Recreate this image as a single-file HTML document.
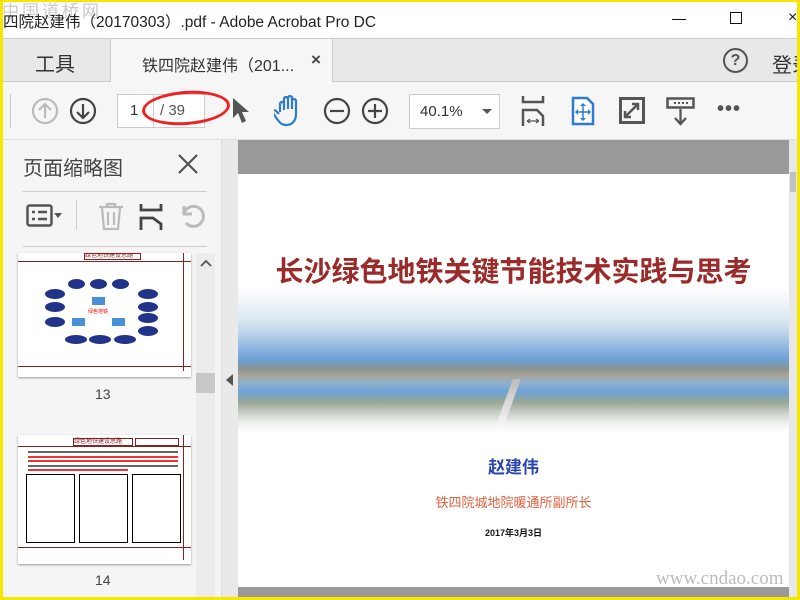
<!DOCTYPE html>
<html><head><meta charset="utf-8"><style>
*{margin:0;padding:0;box-sizing:border-box}
body{width:800px;height:600px;overflow:hidden;background:#fff;position:relative;font-family:"Liberation Sans","Noto Sans CJK SC",sans-serif}
.a{position:absolute;white-space:nowrap}
.ic{position:absolute}
</style></head><body>
<div class="a" style="left:0;top:0;width:800px;height:600px;border:3px solid #f7e600;border-top:2px solid #f7e600;z-index:50;pointer-events:none"></div>
<div class="a" style="left:0;top:0;width:800px;height:38px;background:#fff"></div>
<div class="a" style="left:2px;top:-3px;font-size:17px;color:#c9c9c9;letter-spacing:3px">中国道桥网</div>
<div class="a" style="left:3px;top:10px;font-size:15.5px;color:#222">四院赵建伟（20170303）.pdf - Adobe Acrobat Pro DC</div>
<div class="a" style="left:672px;top:19px;width:14px;height:1px;background:#111"></div>
<div class="a" style="left:730px;top:12px;width:12px;height:12px;border:1px solid #111"></div>
<div class="a" style="left:788px;top:9px;font-size:16px;color:#111">×</div>
<div class="a" style="left:0;top:38px;width:800px;height:44px;background:#e8e8e8;border-top:1px solid #ccc;border-bottom:1px solid #ccc"></div>
<div class="a" style="left:35px;top:48px;font-size:20px;color:#333">工具</div>
<div class="a" style="left:110px;top:39px;width:223px;height:44px;background:#f6f6f6;border-left:1px solid #ccc;border-right:1px solid #ccc"></div>
<div class="a" style="left:142px;top:52px;font-size:16px;color:#333">铁四院赵建伟（201...</div>
<div class="a" style="left:311px;top:50px;font-size:17px;color:#444;font-weight:bold">×</div>
<div class="a" style="left:723px;top:48px;width:25px;height:25px;border:2px solid #555;border-radius:50%;text-align:center;font-size:16px;font-weight:bold;color:#555;line-height:21px">?</div>
<div class="a" style="left:772px;top:49px;font-size:20px;color:#333">登录</div>
<div class="a" style="left:0;top:82px;width:800px;height:58px;background:#f6f6f6;border-bottom:1px solid #ddd"></div>
<div class="a" style="left:10px;top:94px;width:1px;height:34px;background:#ccc"></div>
<svg class="ic" style="left:31px;top:97px" width="28" height="28"><circle cx="14" cy="14" r="12" fill="none" stroke="#bbb" stroke-width="2.2"/><path d="M14 21V8M8 13l6-6 6 6" fill="none" stroke="#bbb" stroke-width="2.2"/></svg>
<svg class="ic" style="left:69px;top:97px" width="28" height="28"><circle cx="14" cy="14" r="12" fill="none" stroke="#444" stroke-width="2.2"/><path d="M14 7v13M8 15l6 6 6-6" fill="none" stroke="#444" stroke-width="2.2"/></svg>
<div class="a" style="left:117px;top:94px;width:37px;height:34px;background:#fff;border:1px solid #ccc"></div>
<div class="a" style="left:130px;top:102px;font-size:15px;color:#333">1</div>
<div class="a" style="left:154px;top:94px;width:51px;height:34px;background:#fff;border:1px solid #ccc;border-left:none"></div>
<div class="a" style="left:160px;top:102px;font-size:15px;color:#555">/ 39</div>
<div class="a" style="left:142px;top:91px;width:88px;height:34px;border:3px solid #e22;border-radius:50%;transform:rotate(-4deg)"></div>
<svg class="ic" style="left:231px;top:96px" width="20" height="30"><path d="M2 2L2 22 7 17 11 27 15 25 11 16 18 16Z" fill="#555"/></svg>
<svg class="ic" style="left:274px;top:94px" width="30" height="34"><path d="M6 18V10a2 2 0 014 0v6V5a2 2 0 014 0v10V4a2 2 0 014 0v11V7a2 2 0 014 0v13c0 7-4 11-10 11-4 0-6-2-9-6l-4-6c-1-2 1-4 3-2l3 3" fill="none" stroke="#2a7bd1" stroke-width="2.2"/></svg>
<svg class="ic" style="left:323px;top:97px" width="28" height="28"><circle cx="14" cy="14" r="12" fill="none" stroke="#444" stroke-width="2.2"/><path d="M7 14h14" stroke="#444" stroke-width="2.2"/></svg>
<svg class="ic" style="left:361px;top:97px" width="28" height="28"><circle cx="14" cy="14" r="12" fill="none" stroke="#444" stroke-width="2.2"/><path d="M7 14h14M14 7v14" stroke="#444" stroke-width="2.2"/></svg>
<div class="a" style="left:409px;top:94px;width:91px;height:35px;background:#fff;border:1px solid #ccc"></div>
<div class="a" style="left:420px;top:103px;font-size:15px;color:#333">40.1%</div>
<div class="a" style="left:482px;top:109px;border-left:5px solid transparent;border-right:5px solid transparent;border-top:5px solid #555"></div>
<svg class="ic" style="left:521px;top:95px" width="26" height="32"><path d="M2 1v6h20V1M2 31V15h14l6 6v10" fill="none" stroke="#555" stroke-width="2.5"/><path d="M6 26h12M6 26l3-2M6 26l3 2M18 26l-3-2M18 26l-3 2" stroke="#555" stroke-width="1.2"/></svg>
<svg class="ic" style="left:571px;top:96px" width="24" height="30"><path d="M2 2h14l6 6v20H2Z" fill="#fff" stroke="#2a7bd1" stroke-width="2.5"/><path d="M12 8v16M5 16h14" stroke="#2a7bd1" stroke-width="1.5"/><path d="M12 7l-3 3h6ZM12 25l-3-3h6ZM4 16l3-3v6ZM20 16l-3-3v6Z" fill="#2a7bd1"/></svg>
<svg class="ic" style="left:619px;top:97px" width="26" height="27"><rect x="1.5" y="1.5" width="23" height="24" fill="none" stroke="#555" stroke-width="3"/><path d="M6 20L19 7M13 7h6v6M6 14v6h6" fill="none" stroke="#555" stroke-width="2.5"/></svg>
<svg class="ic" style="left:666px;top:97px" width="29" height="30"><rect x="1.5" y="1.5" width="26" height="9" fill="none" stroke="#555" stroke-width="2.5"/><path d="M8 6h2M12 6h2M16 6h2M20 6h2" stroke="#555" stroke-width="2"/><path d="M14.5 12v15M9 21l5.5 6 5.5-6" fill="none" stroke="#555" stroke-width="2.3"/></svg>
<div class="a" style="left:717px;top:98px;font-size:20px;color:#555;letter-spacing:1px;font-weight:bold">•••</div>
<div class="a" style="left:0;top:140px;width:222px;height:460px;background:#f5f5f5;border-right:1px solid #ddd"></div>
<div class="a" style="left:23px;top:152px;font-size:20px;color:#444">页面缩略图</div>
<svg class="ic" style="left:177px;top:153px" width="22" height="22"><path d="M2 2l18 18M20 2L2 20" stroke="#555" stroke-width="2.2"/></svg>
<div class="a" style="left:23px;top:191px;width:184px;height:1px;background:#ccc"></div>
<svg class="ic" style="left:26px;top:204px" width="38" height="26"><rect x="1.5" y="1.5" width="24" height="20" rx="2" fill="none" stroke="#555" stroke-width="2.5"/><path d="M6 8h3M12 8h9M6 15h3M12 15h9" stroke="#555" stroke-width="2.5"/><path d="M28 9h8l-4 5Z" fill="#555"/></svg>
<div class="a" style="left:76px;top:200px;width:1px;height:30px;background:#ccc"></div>
<svg class="ic" style="left:97px;top:202px" width="28" height="29"><path d="M2 5h24M10 5V2h8v3M5 6l2 21h14l2-21M11 10v13M17 10v13" fill="none" stroke="#bbb" stroke-width="2.2"/></svg>
<svg class="ic" style="left:139px;top:203px" width="24" height="28"><path d="M2 1v6h20V1M2 27V15h12l8 6v6" fill="none" stroke="#444" stroke-width="2.8"/></svg>
<svg class="ic" style="left:180px;top:203px" width="28" height="28"><path d="M6 20a10 10 0 10-2-10M4 3v8h8" fill="none" stroke="#bbb" stroke-width="3"/></svg>
<div class="a" style="left:23px;top:246px;width:184px;height:1px;background:#ccc"></div>
<div class="a" style="left:18px;top:253px;width:173px;height:124px;background:#fff;box-shadow:0 1px 2px #999;overflow:hidden">
 <div class="a" style="left:66px;top:0;width:57px;height:7px;border:1px solid #8b2020;font-size:6px;color:#8b2020;line-height:5px">绿色地铁建设思路</div>
 <div class="a" style="left:0;top:8px;width:173px;height:1px;background:#8b2020"></div>
 <div class="a" style="left:165px;top:0;width:1px;height:118px;background:#8b2020"></div>
 <div class="a" style="left:0;top:113px;width:173px;height:1px;background:#8b2020"></div>
 <div class="a" style="left:50px;top:26px;width:17px;height:10px;border-radius:50%;background:#22338a"></div>
 <div class="a" style="left:72px;top:26px;width:17px;height:10px;border-radius:50%;background:#22338a"></div>
 <div class="a" style="left:94px;top:26px;width:17px;height:10px;border-radius:50%;background:#22338a"></div>
 <div class="a" style="left:27px;top:36px;width:20px;height:10px;border-radius:50%;background:#22338a"></div>
 <div class="a" style="left:27px;top:49px;width:20px;height:10px;border-radius:50%;background:#22338a"></div>
 <div class="a" style="left:27px;top:64px;width:20px;height:10px;border-radius:50%;background:#22338a"></div>
 <div class="a" style="left:120px;top:36px;width:20px;height:10px;border-radius:50%;background:#22338a"></div>
 <div class="a" style="left:120px;top:49px;width:20px;height:10px;border-radius:50%;background:#22338a"></div>
 <div class="a" style="left:120px;top:60px;width:20px;height:10px;border-radius:50%;background:#22338a"></div>
 <div class="a" style="left:120px;top:73px;width:20px;height:10px;border-radius:50%;background:#22338a"></div>
 <div class="a" style="left:47px;top:82px;width:22px;height:9px;border-radius:50%;background:#22338a"></div>
 <div class="a" style="left:71px;top:82px;width:22px;height:9px;border-radius:50%;background:#22338a"></div>
 <div class="a" style="left:96px;top:82px;width:22px;height:9px;border-radius:50%;background:#22338a"></div>
 <div class="a" style="left:74px;top:44px;width:13px;height:8px;background:#4a90d9"></div>
 <div class="a" style="left:54px;top:65px;width:13px;height:8px;background:#4a90d9"></div>
 <div class="a" style="left:94px;top:65px;width:13px;height:8px;background:#4a90d9"></div>
 <div class="a" style="left:70px;top:55px;font-size:5px;color:#e00">绿色地铁</div>
</div>
<div class="a" style="left:95px;top:386px;font-size:14px;color:#444">13</div>
<div class="a" style="left:18px;top:435px;width:173px;height:129px;background:#fff;box-shadow:0 1px 2px #999;overflow:hidden">
 <div class="a" style="left:55px;top:3px;width:60px;height:8px;border:1px solid #8b2020;font-size:6px;color:#8b2020;line-height:6px">绿色地铁建设思路</div>
 <div class="a" style="left:117px;top:3px;width:44px;height:8px;border:1px solid #8b2020"></div>
 <div class="a" style="left:0;top:11px;width:173px;height:1px;background:#8b2020"></div>
 <div class="a" style="left:10px;top:16px;width:150px;height:2px;background:#666"></div>
 <div class="a" style="left:10px;top:21px;width:150px;height:2px;background:#e33"></div>
 <div class="a" style="left:10px;top:25px;width:150px;height:2px;background:#e33"></div>
 <div class="a" style="left:10px;top:30px;width:150px;height:2px;background:#666"></div>
 <div class="a" style="left:10px;top:34px;width:100px;height:2px;background:#e33"></div>
 <div class="a" style="left:8px;top:39px;width:49px;height:69px;border:1px solid #000"></div>
 <div class="a" style="left:61px;top:39px;width:49px;height:69px;border:1px solid #000"></div>
 <div class="a" style="left:114px;top:39px;width:49px;height:69px;border:1px solid #000"></div>
 <div class="a" style="left:165px;top:0;width:1px;height:125px;background:#8b2020"></div>
 <div class="a" style="left:0;top:112px;width:173px;height:1px;background:#8b2020"></div>
</div>
<div class="a" style="left:95px;top:572px;font-size:14px;color:#444">14</div>
<div class="a" style="left:196px;top:253px;width:19px;height:347px;background:#ececec"></div>
<svg class="ic" style="left:199px;top:258px" width="14" height="10"><path d="M2 8l5-5 5 5" fill="none" stroke="#555" stroke-width="1.8"/></svg>
<div class="a" style="left:196px;top:373px;width:19px;height:20px;background:#c8c8c8"></div>
<div class="a" style="left:222px;top:140px;width:16px;height:460px;background:#e9e9e9"></div>
<div class="a" style="left:226px;top:374px;border-top:6px solid transparent;border-bottom:6px solid transparent;border-right:7px solid #555"></div>
<div class="a" style="left:238px;top:140px;width:559px;height:460px;background:#999"></div>
<div class="a" style="left:238px;top:174px;width:551px;height:413px;background:#fff;overflow:hidden">
 <div class="a" style="left:0;top:76px;width:551px;text-align:center;font-size:28px;font-weight:bold;color:#9b2b2b">长沙绿色地铁关键节能技术实践与思考</div>
 <div class="a" style="left:0;top:113px;width:551px;height:146px;background:linear-gradient(180deg,#fff 0%,#f0f4f8 10%,#dce8f2 22%,#bcd3ea 32%,#8db5e0 42%,#6f9fd4 50%,#8a9490 56%,#a8a395 60%,#8fb0cf 66%,#6ea3d6 72%,#9aa794 79%,#c8cec8 86%,#eef0ef 93%,#fff 100%)"></div>
 <div class="a" style="left:265px;top:205px;width:8px;height:54px;background:linear-gradient(#bbb,#fff);transform:skewX(-20deg)"></div>
 <div class="a" style="left:0;top:279px;width:551px;text-align:center;font-size:17px;font-weight:bold;color:#2a44b0">赵建伟</div>
 <div class="a" style="left:0;top:318px;width:551px;text-align:center;font-size:13px;color:#e06040">铁四院城地院暖通所副所长</div>
 <div class="a" style="left:0;top:352px;width:551px;text-align:center;font-size:9px;font-weight:bold;color:#111">2017年3月3日</div>
 <div class="a" style="left:418px;top:394px;font-size:19px;color:#bbb;font-family:'Liberation Serif',serif">www.cndao.com</div>
</div>
<div class="a" style="left:789px;top:140px;width:8px;height:460px;background:#e8e8e8"></div>
<div class="a" style="left:790px;top:172px;width:6px;height:20px;background:#c0c0c0"></div>
</body></html>
